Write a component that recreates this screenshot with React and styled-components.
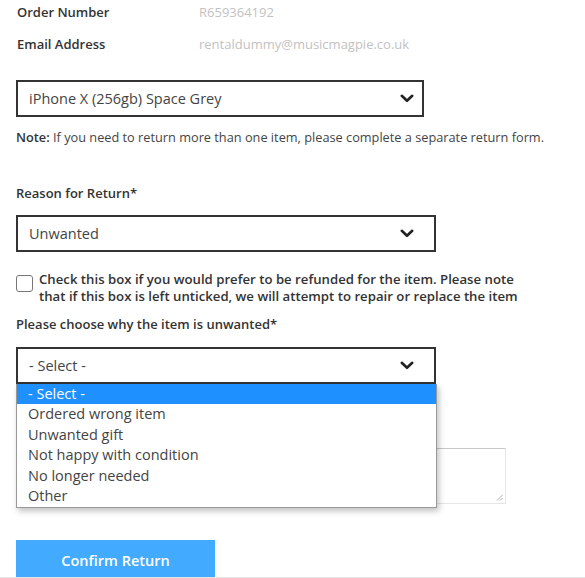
import React from 'react'
import styled, { createGlobalStyle } from 'styled-components'

const GlobalStyle = createGlobalStyle`
  body {
    margin: 0;
    background: #fff;
    font-family: "Open Sans", "Noto Sans", sans-serif;
    color: #333;
  }
`

const Page = styled.div`
  width: 585px;
  height: 578px;
  overflow: hidden;
  position: relative;
`

const Form = styled.div`
  padding: 2px 16px 0;
  display: flex;
  flex-direction: column;
`

const InfoRow = styled.div`
  display: flex;
  align-items: center;
  height: 20px;
  margin-bottom: 12px;
  font-size: 13px;
`

const InfoLabel = styled.span`
  width: 182px;
  padding-left: 1px;
  font-weight: 600;
  color: #333;
`

const InfoValue = styled.span`
  color: #c2c2c2;
`

const SelectWrap = styled.div`
  position: relative;
  z-index: ${(p) => (p.open ? 2 : 'auto')};
  width: ${(p) => p.width}px;
  margin-top: ${(p) => p.top || 0}px;
`

const SelectBox = styled.div`
  box-sizing: border-box;
  height: 37px;
  border: 2px solid #333;
  display: flex;
  align-items: center;
  justify-content: space-between;
  padding: 0 ${(p) => p.arrowGap}px 0 11px;
  font-size: 14.5px;
  color: #444;
`

const Chevron = () => (
  <svg width="14" height="9" viewBox="0 0 14 9">
    <path d="M1.8 1.8 L7 6.8 L12.2 1.8" fill="none" stroke="#222" strokeWidth="2.6" strokeLinecap="round" strokeLinejoin="round" />
  </svg>
)

const Note = styled.p`
  margin: 11px 0 0;
  font-size: 12.75px;
  line-height: 18px;
  color: #444;

  b {
    font-weight: 600;
    color: #333;
  }
`

const Label = styled.div`
  font-size: 13px;
  font-weight: 600;
  line-height: 18px;
  color: #333;
  margin-top: ${(p) => p.top}px;
`

const CheckRow = styled.label`
  display: flex;
  align-items: flex-start;
  gap: 6px;
  margin-top: 19px;
`

const CheckBox = styled.span`
  box-sizing: border-box;
  flex: none;
  width: 17px;
  height: 17px;
  margin-top: 4px;
  border: 1px solid #777;
  border-radius: 3px;
  background: #fff;
`

const CheckText = styled.span`
  font-size: 13.2px;
  font-weight: 600;
  line-height: 17px;
  color: #333;
  width: 490px;
`

const Menu = styled.ul`
  position: absolute;
  top: 100%;
  left: 0;
  right: -1px;
  margin: 0;
  padding: 0 0 1px;
  list-style: none;
  background: #fff;
  border: 1px solid #999;
  border-top: none;
  box-shadow: 2px 3px 6px rgba(0, 0, 0, 0.25);
`

const Option = styled.li`
  height: 20.4px;
  line-height: 20.4px;
  padding-left: 11px;
  font-size: 14.5px;
  color: ${(p) => (p.active ? '#fff' : '#444')};
  background: ${(p) => (p.active ? '#1e90ff' : 'transparent')};
`

const TextArea = styled.div`
  position: relative;
  box-sizing: border-box;
  width: 490px;
  height: 56px;
  margin-top: 64px;
  border: 1px solid #e6e6e6;
  border-top-color: #c8c8c8;
`

const Grip = styled.svg`
  position: absolute;
  right: 2px;
  bottom: 2px;
`

const Button = styled.button`
  margin-top: 36px;
  width: 199px;
  height: 42px;
  border: none;
  background: #42aaff;
  color: #fff;
  font-family: inherit;
  font-size: 14.5px;
  font-weight: 600;
  padding-bottom: 2px;
`

const Footer = styled.div`
  position: absolute;
  left: 0;
  right: 0;
  bottom: 0;
  height: 1px;
  background: #e4e4e4;
`

const options = [
  '- Select -',
  'Ordered wrong item',
  'Unwanted gift',
  'Not happy with condition',
  'No longer needed',
  'Other',
]

export default function App() {
  return (
    <Page>
      <GlobalStyle />
      <Form>
        <InfoRow>
          <InfoLabel>Order Number</InfoLabel>
          <InfoValue>R659364192</InfoValue>
        </InfoRow>
        <InfoRow>
          <InfoLabel>Email Address</InfoLabel>
          <InfoValue>rentaldummy@musicmagpie.co.uk</InfoValue>
        </InfoRow>

        <SelectWrap width={408} top={14}>
          <SelectBox arrowGap={8}>
            <span>iPhone X (256gb) Space Grey</span>
            <Chevron />
          </SelectBox>
        </SelectWrap>

        <Note>
          <b>Note:</b> If you need to return more than one item, please complete a separate return form.
        </Note>

        <Label top={38}>Reason for Return*</Label>
        <SelectWrap width={420} top={13}>
          <SelectBox arrowGap={20}>
            <span>Unwanted</span>
            <Chevron />
          </SelectBox>
        </SelectWrap>

        <CheckRow>
          <CheckBox />
          <CheckText>
            Check this box if you would prefer to be refunded for the item. Please note that if this box is left unticked, we will attempt to repair or replace the item
          </CheckText>
        </CheckRow>

        <Label top={10}>Please choose why the item is unwanted*</Label>
        <SelectWrap width={420} top={14} open>
          <SelectBox arrowGap={20}>
            <span>- Select -</span>
            <Chevron />
          </SelectBox>
          <Menu>
            {options.map((o, i) => (
              <Option key={o} active={i === 0}>{o}</Option>
            ))}
          </Menu>
        </SelectWrap>

        <TextArea>
          <Grip width="7" height="7" viewBox="0 0 7 7">
            <path d="M1 6.5 L6.5 1 M4 6.5 L6.5 4" stroke="#999" strokeWidth="0.8" />
          </Grip>
        </TextArea>

        <Button>Confirm Return</Button>
      </Form>
      <Footer />
    </Page>
  )
}
